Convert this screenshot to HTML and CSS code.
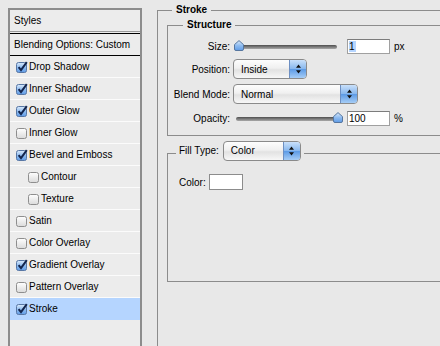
FILE: index.html
```html
<!DOCTYPE html>
<html lang="en">
<head>
<meta charset="UTF-8" />
<title>Layer Style</title>
<link rel="stylesheet" href="styles.css">
</head>
<body>
<svg class="defs" xmlns="http://www.w3.org/2000/svg">
  <defs>
    <linearGradient id="gBlue" x1="0" y1="0" x2="0" y2="1">
      <stop offset="0" stop-color="#dcebfb" />
      <stop offset="0.5" stop-color="#8fbcf0" />
      <stop offset="1" stop-color="#5f9be6" />
    </linearGradient>
    <linearGradient id="gGrey" x1="0" y1="0" x2="0" y2="1">
      <stop offset="0" stop-color="#ffffff" />
      <stop offset="1" stop-color="#dadada" />
    </linearGradient>
    <symbol id="cb-on" viewBox="0 0 12 12">
      <rect x="0.5" y="1.5" width="10" height="10" rx="2" fill="url(#gBlue)" stroke="#5877a4" />
      <path d="M2.6 6.2 L5 9.2 L10.8 1.2" fill="none" stroke="#13254d" stroke-width="2" />
    </symbol>
    <symbol id="cb-off" viewBox="0 0 12 12">
      <rect x="0.5" y="1.5" width="10" height="10" rx="2" fill="url(#gGrey)" stroke="#8e8e8e" />
    </symbol>
    <symbol id="updown" viewBox="0 0 7 10">
      <path d="M3.5 0.5 L6 3.8 H1 Z M3.5 9.5 L6 6.2 H1 Z" fill="#111" />
    </symbol>
    <symbol id="knob" viewBox="0 0 10 11">
      <path d="M5 0.6 L9.5 4.6 V9 Q9.5 10.5 8 10.5 H2 Q0.5 10.5 0.5 9 V4.6 Z" fill="url(#gBlue)" stroke="#56769f" />
    </symbol>
  </defs>
</svg>

<div class="dialog">
  <ul class="style-list">
    <li class="head">Styles</li>
    <li class="blending">Blending Options: Custom</li>
    <li><svg class="cb"><use href="#cb-on" /></svg>Drop Shadow</li>
    <li><svg class="cb"><use href="#cb-on" /></svg>Inner Shadow</li>
    <li><svg class="cb"><use href="#cb-on" /></svg>Outer Glow</li>
    <li><svg class="cb"><use href="#cb-off" /></svg>Inner Glow</li>
    <li><svg class="cb"><use href="#cb-on" /></svg>Bevel and Emboss</li>
    <li class="sub"><svg class="cb"><use href="#cb-off" /></svg>Contour</li>
    <li class="sub"><svg class="cb"><use href="#cb-off" /></svg>Texture</li>
    <li><svg class="cb"><use href="#cb-off" /></svg>Satin</li>
    <li><svg class="cb"><use href="#cb-off" /></svg>Color Overlay</li>
    <li><svg class="cb"><use href="#cb-on" /></svg>Gradient Overlay</li>
    <li><svg class="cb"><use href="#cb-off" /></svg>Pattern Overlay</li>
    <li class="selected"><svg class="cb"><use href="#cb-on" /></svg>Stroke</li>
  </ul>

  <div class="options">
    <fieldset class="group stroke">
      <legend>Stroke</legend>

      <fieldset class="group structure">
        <legend>Structure</legend>
        <div class="form">
          <span class="label">Size:</span>
          <div class="control">
            <div class="slider">
              <div class="track"></div>
              <svg class="thumb at-start"><use href="#knob" /></svg>
            </div>
            <div class="field"><span class="sel">1</span></div>
            <span class="unit">px</span>
          </div>

          <span class="label">Position:</span>
          <div class="control">
            <div class="popup w-position">
              <span class="value">Inside</span>
              <span class="arrows"><svg><use href="#updown" /></svg></span>
            </div>
          </div>

          <span class="label">Blend Mode:</span>
          <div class="control">
            <div class="popup w-blend">
              <span class="value">Normal</span>
              <span class="arrows"><svg><use href="#updown" /></svg></span>
            </div>
          </div>

          <span class="label">Opacity:</span>
          <div class="control">
            <div class="slider">
              <div class="track"></div>
              <svg class="thumb at-end"><use href="#knob" /></svg>
            </div>
            <div class="field">100</div>
            <span class="unit">%</span>
          </div>
        </div>
      </fieldset>

      <fieldset class="group fill">
        <legend>
          <span>Fill Type:</span>
          <div class="popup w-fill">
            <span class="value">Color</span>
            <span class="arrows"><svg><use href="#updown" /></svg></span>
          </div>
        </legend>
        <div class="color-row">
          <span>Color:</span>
          <div class="swatch"></div>
        </div>
      </fieldset>
    </fieldset>
  </div>
</div>
</body>
</html>
```

FILE: styles.css
```css
html, body {
  overflow: hidden;
}
body {
  margin: 0;
  background: #e8e8e8;
  font: 10px "Liberation Sans", Arial, sans-serif;
  color: #000;
}
.defs {
  display: block;
  width: 0;
  height: 0;
}
.dialog {
  display: flex;
  align-items: flex-start;
  width: 440px;
  height: 346px;
  overflow: hidden;
}

/* left list */
.style-list {
  flex: none;
  list-style: none;
  margin: 8px 0 0 8px;
  padding: 0;
  width: 130px;
  height: 360px;
  border: 2px solid #8c8c8c;
  background: #ececec;
  white-space: nowrap;
}
.style-list li {
  display: flex;
  align-items: center;
  height: 21px;
  padding-left: 6px;
  border-bottom: 1px solid #fbfbfb;
}
.style-list li.sub {
  padding-left: 18px;
}
.style-list li.head {
  padding-left: 4px;
  border-bottom: 1px solid #9a9a9a;
}
.style-list li.blending {
  padding-left: 4px;
  margin-top: 1px;
  border-top: 1px solid #000;
  border-bottom: 1px solid #000;
}
.style-list li.selected {
  background: #b5d5ff;
  border-bottom-color: #b5d5ff;
}
.cb {
  width: 12px;
  height: 12px;
  margin-right: 1px;
  flex: none;
}

/* right side */
.options {
  flex: none;
  margin: 4px 0 0 15px;
}
.group {
  margin: 0;
  border: 1px solid #8c8c8c;
  min-inline-size: 0;
}
.group > legend {
  font-weight: bold;
  line-height: 12px;
  padding: 0 4px;
}
.stroke {
  width: 400px;
  height: 400px;
  padding: 0 0 0 9px;
}
.stroke > legend {
  margin-left: 5px;
}
.structure {
  width: 320px;
  margin-top: 3px;
  padding: 4px 0 6px 0;
}
.structure > legend {
  margin-left: 15px;
}
.form {
  display: grid;
  grid-template-columns: 62px auto;
  grid-template-rows: 22px 24px 26px 22px;
  column-gap: 3px;
  align-items: center;
}
.label {
  text-align: right;
}
.control {
  display: flex;
  align-items: center;
}

.slider {
  position: relative;
  width: 106px;
  height: 12px;
  margin-right: 8px;
}
.track {
  margin: 5px 2px 0 3px;
  height: 4px;
  border-radius: 2px;
  background: linear-gradient(#4e4e4e, #a9a9a9);
}
.thumb {
  position: absolute;
  top: 0;
  width: 10px;
  height: 11px;
}
.thumb.at-start {
  left: 1px;
}
.thumb.at-end {
  left: 100px;
}
.field {
  width: 40px;
  height: 13px;
  line-height: 13px;
  padding-left: 1px;
  background: #fff;
  border: 1px solid #a0a0a0;
  border-top-color: #7c7c7c;
  margin-right: 4px;
}
.sel {
  background: #b5d5ff;
  padding-right: 1px;
}

.popup {
  display: flex;
  align-items: stretch;
  height: 18px;
  border: 1px solid #8a8a8a;
  border-radius: 4px;
  background: linear-gradient(#fdfdfd, #f0f0f0 45%, #e2e2e2 55%, #f7f7f7);
  font-weight: normal;
}
.popup .value {
  flex: 1;
  display: flex;
  align-items: center;
  padding-left: 7px;
}
.popup .arrows {
  width: 16px;
  display: flex;
  align-items: center;
  justify-content: center;
  border-left: 1px solid #6d8fc2;
  border-radius: 0 3px 3px 0;
  background: linear-gradient(#c9e0fa, #89b8ee 48%, #5d9be6 52%, #a6cdf6);
}
.popup .arrows svg {
  width: 7px;
  height: 10px;
}
.w-position {
  width: 72px;
}
.w-blend {
  width: 123px;
}
.w-fill {
  width: 76px;
}

.fill {
  width: 320px;
  margin-top: 5px;
  padding: 9px 0 91px 0;
}
.fill > legend {
  display: flex;
  align-items: flex-start;
  gap: 4px;
  margin-left: 8px;
  padding: 0 3px 4px;
  font-weight: normal;
  line-height: 20px;
}
.color-row {
  display: flex;
  align-items: center;
  gap: 3px;
  padding-left: 11px;
}
.swatch {
  width: 32px;
  height: 14px;
  background: #fff;
  border: 1px solid #8c8c8c;
}
```
